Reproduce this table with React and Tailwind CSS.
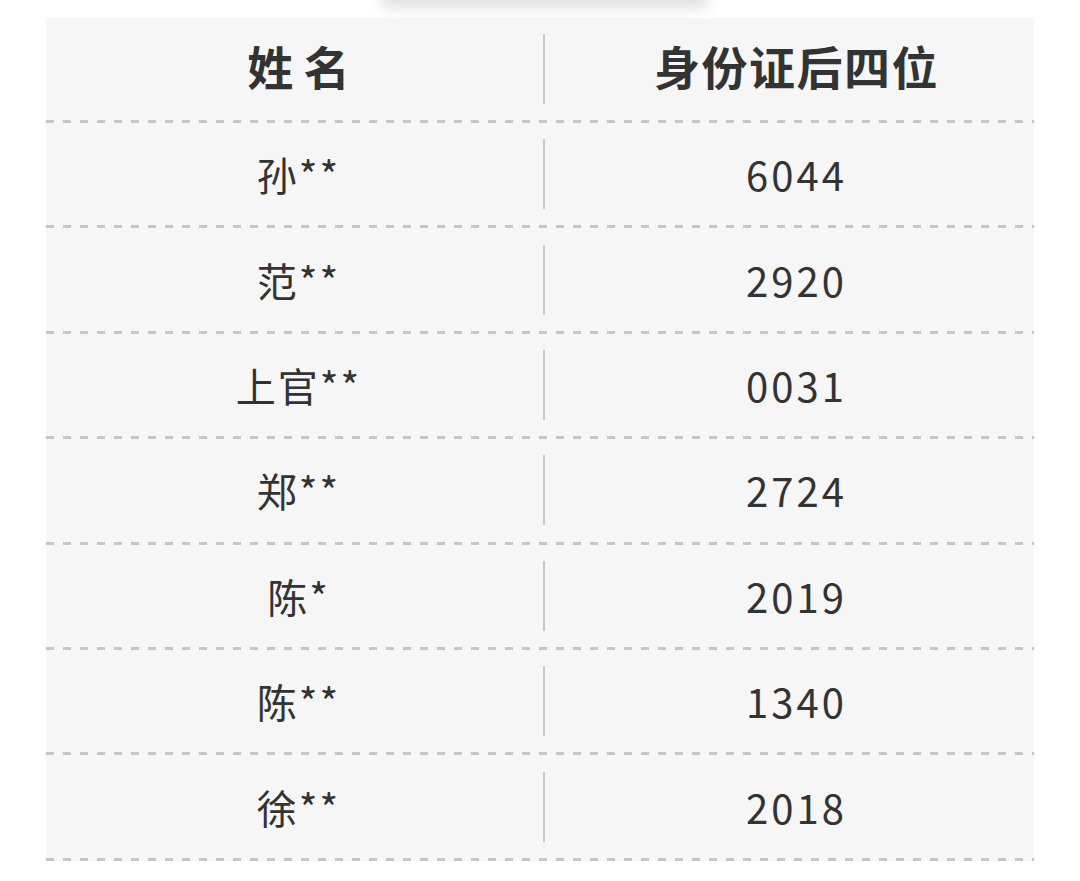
import React from "react";

const rows = [
  ["孙**", "6044"],
  ["范**", "2920"],
  ["上官**", "0031"],
  ["郑**", "2724"],
  ["陈*", "2019"],
  ["陈**", "1340"],
  ["徐**", "2018"],
];

const font = { fontFamily: '"Noto Sans CJK SC", "Noto Sans", sans-serif' };

function Dash() {
  return (
    <div className="h-[3px] w-full bg-[repeating-linear-gradient(to_right,#c6c6c6_0px,#c6c6c6_8px,transparent_8px,transparent_17px)]" />
  );
}

export default function App() {
  return (
    <div className="min-h-[881px] w-[1080px] bg-white overflow-hidden" style={font}>
      <div className="mx-auto -mt-[14px] ml-[380px] h-[22px] w-[330px] rounded-full bg-[#d4d4d4] blur-[7px] opacity-70" />
      <div className="ml-[46px] mt-[10px] w-[988px] bg-[#f6f6f6]">
        <div className="flex h-[102px] items-center">
          <div className="flex w-[497px] justify-center pl-[8px] pb-[8px] text-[46px] font-bold leading-none text-[#333]">
            姓 名
          </div>
          <div className="h-[70px] w-[2px] bg-[#c8c8c8]" />
          <div className="flex flex-1 justify-center pl-[14px] pb-[8px] text-[46px] font-bold leading-none tracking-[1.5px] text-[#333]">
            身份证后四位
          </div>
        </div>
        <Dash />
        {rows.map(([n, id], i) => (
          <div key={i}>
            <div className="flex h-[102.4px] items-center">
              <div className="flex w-[497px] justify-center pl-[8px] text-[40px] leading-none tracking-[2px] text-[#333]">
                {n}
              </div>
              <div className="h-[70px] w-[2px] bg-[#c8c8c8]" />
              <div className="flex flex-1 justify-center pl-[14px] text-[40px] leading-none tracking-[3px] text-[#333]">
                {id}
              </div>
            </div>
            <Dash />
          </div>
        ))}
      </div>
    </div>
  );
}
